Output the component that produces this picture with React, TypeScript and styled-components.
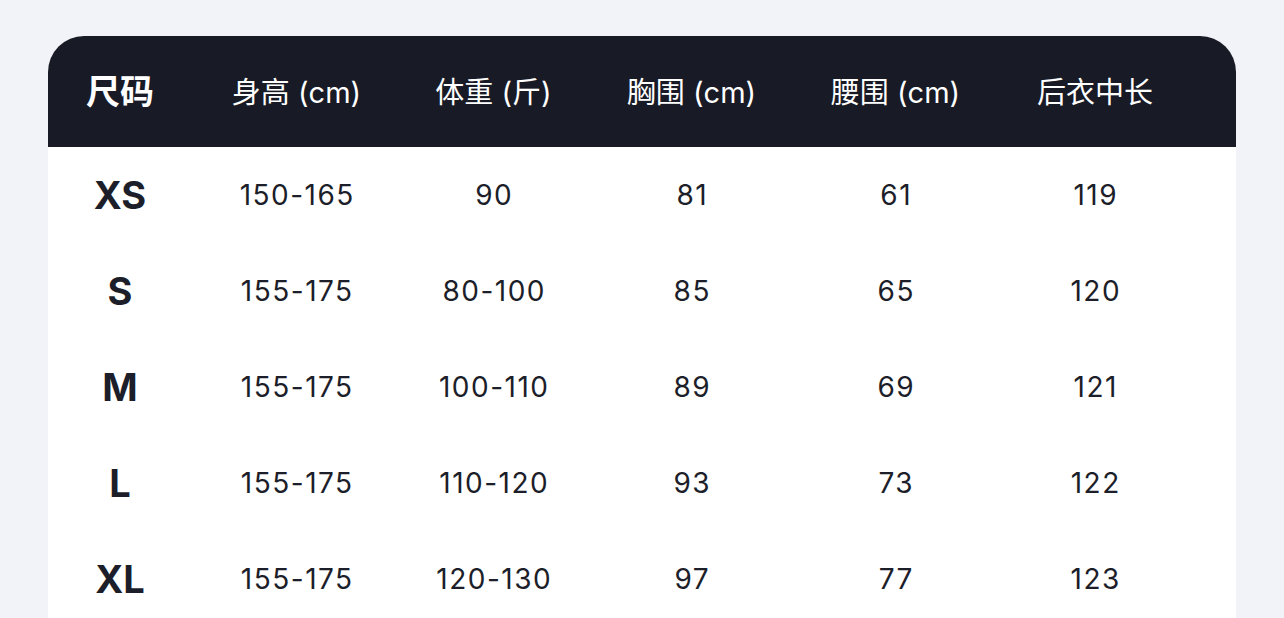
import styled, { createGlobalStyle } from 'styled-components'

const GlobalStyle = createGlobalStyle`
  html, body {
    margin: 0;
    padding: 0;
    background: #f2f3f8;
    overflow: hidden;
  }
  body {
    font-family: Inter, "Noto Sans CJK SC", sans-serif;
  }
`

const COLUMNS = '144px 209px 185px 211px 197px 202px'

const headers = ['身高 (cm)', '体重 (斤)', '胸围 (cm)', '腰围 (cm)', '后衣中长']

const rows = [
  { size: 'XS', values: ['150-165', '90', '81', '61', '119'] },
  { size: 'S', values: ['155-175', '80-100', '85', '65', '120'] },
  { size: 'M', values: ['155-175', '100-110', '89', '69', '121'] },
  { size: 'L', values: ['155-175', '110-120', '93', '73', '122'] },
  { size: 'XL', values: ['155-175', '120-130', '97', '77', '123'] },
]

const App = () => {
  return (<>
    <GlobalStyle />
    <Page>
      <Card>
        <HeaderRow>
          <SizeHead>尺码</SizeHead>
          {headers.map((h) => (
            <HeadCell key={h}>{h}</HeadCell>
          ))}
        </HeaderRow>
        {rows.map((row) => (
          <DataRow key={row.size}>
            <SizeCell>{row.size}</SizeCell>
            {row.values.map((v, i) => (
              <Cell key={i}>{v}</Cell>
            ))}
          </DataRow>
        ))}
      </Card>
    </Page>
  </>
  )
}

const Page = styled.div`
  padding: 36px 48px 0;
  height: 618px;
  box-sizing: border-box;
`

const Card = styled.div`
  width: 1188px;
  background: #ffffff;
  border-radius: 36px 36px 0 0;
  overflow: hidden;
`

const HeaderRow = styled.div`
  display: grid;
  grid-template-columns: ${COLUMNS};
  align-items: center;
  height: 111px;
  padding-bottom: 4px;
  box-sizing: border-box;
  background: #181a25;
  color: #ffffff;
`

const HeadCell = styled.div`
  text-align: center;
  font-size: 29px;
  font-weight: 400;
  white-space: nowrap;
`

const SizeHead = styled(HeadCell)`
  font-size: 34px;
  font-weight: 700;
`

const DataRow = styled.div`
  display: grid;
  grid-template-columns: ${COLUMNS};
  align-items: center;
  height: 96px;
  color: #1c1e29;
`

const Cell = styled.div`
  text-align: center;
  font-size: 28px;
  font-weight: 400;
  letter-spacing: 1.5px;
  text-indent: 1.5px;
`

const SizeCell = styled(Cell)`
  font-size: 38px;
  font-weight: 700;
  letter-spacing: 0;
  text-indent: 0;
`

export default App
